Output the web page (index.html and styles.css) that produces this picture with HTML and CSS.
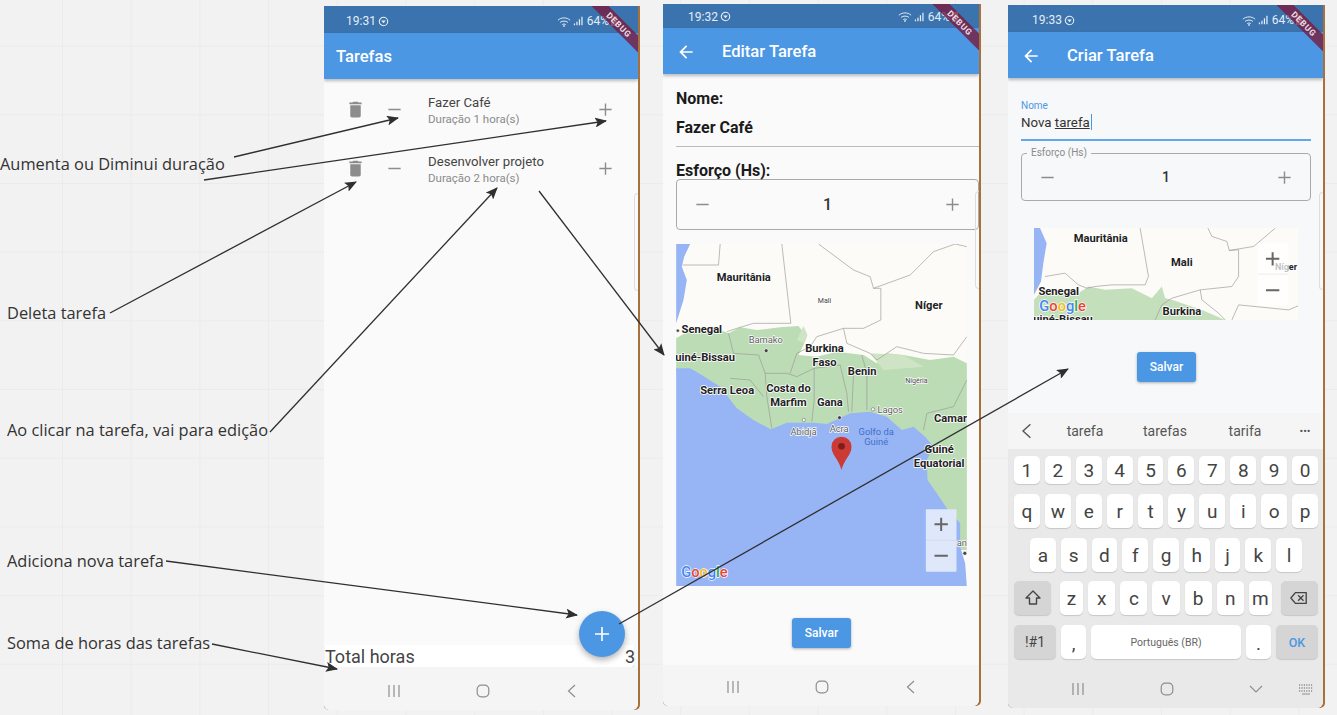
FILE: index.html
```html
<!DOCTYPE html>
<html lang="pt-BR">
<head>
    <meta charset="UTF-8">
    <meta name="viewport" content="width=device-width, initial-scale=1.0">
    <title>Tarefas - fluxo de telas</title>
    <link rel="stylesheet" href="styles.css">
</head>
<body>
    <svg class="sprite" aria-hidden="true">
        <symbol id="i-trash" viewBox="0 0 24 24"><path d="M6 19c0 1.1.9 2 2 2h8c1.1 0 2-.9 2-2V7H6v12zM19 4h-3.500l-1-1h-5l-1 1H5v2h14V4z"/></symbol>
        <symbol id="i-plus" viewBox="0 0 24 24"><path d="M19 12.800h-6.200V19h-1.600v-6.200H5v-1.600h6.200V5h1.600v6.200H19z"/></symbol>
        <symbol id="i-minus" viewBox="0 0 24 24"><path d="M19 12.800H5v-1.600h14z"/></symbol>
        <symbol id="i-back" viewBox="0 0 24 24"><path d="M20 11H7.830l5.590-5.590L12 4l-8 8 8 8 1.410-1.410L7.830 13H20v-2z"/></symbol>
        <symbol id="i-wifi" viewBox="0 0 16 12"><path d="M1 4.500C5 1 11 1 15 4.500M3.500 7C6 5 10 5 12.500 7M6 9.500c1.200-.8 2.800-.8 4 0" fill="none" stroke="currentColor" stroke-width="1.100"/><circle cx="8" cy="11" r="1"/></symbol>
        <symbol id="i-signal" viewBox="0 0 12 12"><path d="M1 9h1.500v2H1zM4 7h1.500v4H4zM7 4h1.500v7H7zM10 1h1.500v10H10z"/></symbol>
        <symbol id="i-target" viewBox="0 0 12 12"><circle cx="6" cy="6" r="4.600" fill="none" stroke="currentColor" stroke-width="1.200"/><path d="M3.500 5h5L6 8z"/></symbol>
        <symbol id="i-nav-recent" viewBox="0 0 14 14"><path d="M2 1v12M7 1v12M12 1v12" fill="none" stroke="currentColor" stroke-width="1.200"/></symbol>
        <symbol id="i-nav-home" viewBox="0 0 14 14"><rect x="1.200" y="1.200" width="11.600" height="11.600" rx="4" fill="none" stroke="currentColor" stroke-width="1.200"/></symbol>
        <symbol id="i-nav-back" viewBox="0 0 14 14"><path d="M10 1L3.500 7l6.500 6" fill="none" stroke="currentColor" stroke-width="1.200"/></symbol>
    </svg>

    <main class="canvas">
        <p class="note note-duration">Aumenta ou Diminui duração</p>
        <p class="note note-delete">Deleta tarefa</p>
        <p class="note note-edit">Ao clicar na tarefa, vai para edição</p>
        <p class="note note-add">Adiciona nova tarefa</p>
        <p class="note note-sum">Soma de horas das tarefas</p>

        <!-- tela 1: lista -->
        <section class="phone phone-list">
            <div class="screen">
                <div class="status">
                    <span class="clock">19:31</span>
                    <svg class="ic-target"><use href="#i-target"/></svg>
                    <span class="status-right">
                        <svg class="ic-wifi"><use href="#i-wifi"/></svg>
                        <svg class="ic-signal"><use href="#i-signal"/></svg>
                        <span>64%</span>
                        <span class="battery"></span>
                    </span>
                </div>
                <header class="appbar"><h1>Tarefas</h1></header>
                <div class="list">
                    <div class="task">
                        <svg class="ic ic-trash"><use href="#i-trash"/></svg>
                        <svg class="ic ic-step"><use href="#i-minus"/></svg>
                        <div class="task-text">
                            <p class="task-name">Fazer Café</p>
                            <p class="task-sub">Duração 1 hora(s)</p>
                        </div>
                        <svg class="ic ic-step"><use href="#i-plus"/></svg>
                    </div>
                    <div class="task">
                        <svg class="ic ic-trash"><use href="#i-trash"/></svg>
                        <svg class="ic ic-step"><use href="#i-minus"/></svg>
                        <div class="task-text">
                            <p class="task-name">Desenvolver projeto</p>
                            <p class="task-sub">Duração 2 hora(s)</p>
                        </div>
                        <svg class="ic ic-step"><use href="#i-plus"/></svg>
                    </div>
                </div>
                <div class="total"><span>Total horas</span><span>3</span></div>
                <nav class="navbar">
                    <svg><use href="#i-nav-recent"/></svg>
                    <svg><use href="#i-nav-home"/></svg>
                    <svg><use href="#i-nav-back"/></svg>
                </nav>
            </div>
            <button class="fab"><svg><use href="#i-plus"/></svg></button>
            <div class="edge-tab"></div>
            <div class="ribbon"><span>DEBUG</span></div>
        </section>

        <!-- tela 2: editar -->
        <section class="phone phone-edit">
            <div class="screen">
                <div class="status">
                    <span class="clock">19:32</span>
                    <svg class="ic-target"><use href="#i-target"/></svg>
                    <span class="status-right">
                        <svg class="ic-wifi"><use href="#i-wifi"/></svg>
                        <svg class="ic-signal"><use href="#i-signal"/></svg>
                        <span>64%</span>
                        <span class="battery"></span>
                    </span>
                </div>
                <header class="appbar">
                    <svg class="ic-back"><use href="#i-back"/></svg>
                    <h1>Editar Tarefa</h1>
                </header>
                <div class="edit-form">
                    <p class="bold-label">Nome:</p>
                    <p class="bold-value">Fazer Café</p>
                    <p class="bold-label effort-label">Esforço (Hs):</p>
                    <div class="stepper stepper-edit">
                        <svg class="ic ic-step"><use href="#i-minus"/></svg>
                        <span>1</span>
                        <svg class="ic ic-step"><use href="#i-plus"/></svg>
                    </div>
                    <svg class="map map-large" viewBox="18 12 872 1026">
                        <rect x="18" y="12" width="872" height="1026" fill="#fdfbf7"/>
                        <path d="M18 400L18 295L70 265L130 262L175 280L210 262L260 270L330 262L385 258L410 290L400 315L385 345L440 350L500 335L580 345L620 370L650 340L700 345L780 360L850 350L890 370L890 930L700 930Z" fill="#bcdcb6"/>
                        <path d="M380 300L400 258L412 285L400 310ZM600 340L700 345L760 380L640 390Z" fill="#cfe4c4"/>
                        <path d="M18 12L60 12L42 50L35 80L50 120L40 180L18 250Z" fill="#97b5f5"/>
                        <path d="M18 385L60 385L95 405L150 440L200 505L250 540L302 568L350 548L430 548L470 552L540 520L600 515L650 530L695 570L730 560L765 590L790 620L770 660L772 720L800 760L830 805L870 850L870 920L885 970L890 1038L18 1038Z" fill="#97b5f5"/>
                        <g fill="none" stroke="#9a9a94" stroke-width="2">
                            <path d="M150 12L145 75L38 75"/>
                            <path d="M335 12L362 250L250 250L200 265L170 275"/>
                            <path d="M445 12L550 90L600 110L610 145L720 105L790 35L855 12L890 20"/>
                            <path d="M610 145L632 145L632 240L580 265L520 265L440 290L420 320L380 340L360 400"/>
                            <path d="M520 265L530 310L600 340L620 360L680 320L760 340L850 345L890 290"/>
                            <path d="M175 280L190 340L265 345L285 400L290 470L305 565"/>
                            <path d="M285 400L350 400L380 410L432 385L432 480L425 545"/>
                            <path d="M432 385L510 375L530 460L535 515"/>
                            <path d="M575 345L590 400L590 510M550 400L545 515"/>
                            <path d="M180 415L240 420L280 470M890 420L850 500L770 520L760 570"/>
                        </g>
                        <g class="map-dots">
                            <circle cx="288" cy="332" r="6"/><circle cx="508" cy="533" r="6"/><circle cx="23" cy="272" r="5"/><circle cx="884" cy="940" r="6"/>
                        </g>
                        <circle cx="401" cy="540" r="5" fill="#fff" stroke="#777" stroke-width="2"/>
                        <circle cx="608" cy="508" r="5" fill="#fff" stroke="#777" stroke-width="2"/>
                        <g class="map-b" text-anchor="middle">
                            <text x="221" y="122">Mauritânia</text>
                            <text x="776" y="207">Níger</text>
                            <text x="95" y="278">Senegal</text>
                            <text x="463" y="336">Burkina</text>
                            <text x="463" y="377">Faso</text>
                            <text x="576" y="405">Benin</text>
                            <text x="105" y="364">uiné-Bissau</text>
                            <text x="171" y="463">Serra Leoa</text>
                            <text x="355" y="456">Costa do</text>
                            <text x="355" y="497">Marfim</text>
                            <text x="479" y="497">Gana</text>
                            <text x="841" y="545">Camar</text>
                            <text x="807" y="640">Guiné</text>
                            <text x="807" y="681">Equatorial</text>
                        </g>
                        <g class="map-s" text-anchor="middle">
                            <text x="463" y="190" class="map-tiny">Mali</text>
                            <text x="739" y="428" class="map-tiny">Nigéria</text>
                            <text x="287" y="310">Bamako</text>
                            <text x="660" y="518">Lagos</text>
                            <text x="400" y="584">Abidjã</text>
                            <text x="507" y="577">Acra</text>
                            <text x="860" y="918">Luan</text>
                        </g>
                        <g class="map-sea" text-anchor="middle">
                            <text x="618" y="584">Golfo da</text>
                            <text x="618" y="614">Guiné</text>
                        </g>
                        <path d="M514 690C505 655 484 645 484 620a30 30 0 0 1 60 0C544 645 523 655 514 690z" fill="#cb3a34"/>
                        <circle cx="514" cy="619" r="10" fill="#7e1e1b"/>
                        <rect x="767" y="808" width="92" height="187" rx="3" fill="#dfe7fb"/>
                        <path d="M767 901H859" stroke="#ccd4e6" stroke-width="2"/>
                        <path d="M793 853H833M813 833V873M793 947H833" stroke="#666" stroke-width="6" fill="none"/>
                        <text class="map-google" x="33" y="1012"><tspan fill="#4285f4">G</tspan><tspan fill="#ea4335">o</tspan><tspan fill="#fbbc05">o</tspan><tspan fill="#4285f4">g</tspan><tspan fill="#34a853">l</tspan><tspan fill="#ea4335">e</tspan></text>
                    </svg>
                    <button class="save save-edit">Salvar</button>
                </div>
                <nav class="navbar">
                    <svg><use href="#i-nav-recent"/></svg>
                    <svg><use href="#i-nav-home"/></svg>
                    <svg><use href="#i-nav-back"/></svg>
                </nav>
            </div>
            <div class="edge-tab"></div>
            <div class="ribbon"><span>DEBUG</span></div>
        </section>

        <!-- tela 3: criar -->
        <section class="phone phone-create">
            <div class="screen">
                <div class="status">
                    <span class="clock">19:33</span>
                    <svg class="ic-target"><use href="#i-target"/></svg>
                    <span class="status-right">
                        <svg class="ic-wifi"><use href="#i-wifi"/></svg>
                        <svg class="ic-signal"><use href="#i-signal"/></svg>
                        <span>64%</span>
                        <span class="battery"></span>
                    </span>
                </div>
                <header class="appbar">
                    <svg class="ic-back"><use href="#i-back"/></svg>
                    <h1>Criar Tarefa</h1>
                </header>
                <div class="create-form">
                    <div class="name-field">
                        <label>Nome</label>
                        <p>Nova <u>tarefa</u><span class="caret"></span></p>
                    </div>
                    <fieldset class="stepper stepper-create">
                        <legend>Esforço (Hs)</legend>
                        <svg class="ic ic-step"><use href="#i-minus"/></svg>
                        <span>1</span>
                        <svg class="ic ic-step"><use href="#i-plus"/></svg>
                    </fieldset>
                    <svg class="map map-small" viewBox="87 25 791 275">
                        <rect x="87" y="25" width="791" height="275" fill="#fdfbf7"/>
                        <path d="M87 240L110 215L220 220L250 200L300 210L380 205L440 235L470 200L480 235L500 240L590 270L660 300L87 300Z" fill="#c4dfbb"/>
                        <path d="M87 25L105 25L125 70L115 130L108 185L87 225Z" fill="#97b5f5"/>
                        <g fill="none" stroke="#9a9a94" stroke-width="2">
                            <path d="M405 25L430 170L420 195L320 195L270 200L245 205L220 195L180 160L120 170"/>
                            <path d="M608 25L620 50L665 65L672 92L745 80L810 25"/>
                            <path d="M672 92L700 90L700 170L680 200L585 210L500 235L470 255L450 300"/>
                            <path d="M585 210L590 240L640 280L660 300M680 300L700 255L770 262L850 270L878 258"/>
                        </g>
                        <g class="map-b" text-anchor="middle">
                            <text x="287" y="68">Mauritânia</text>
                            <text x="530" y="139">Mali</text>
                            <text x="161" y="224">Senegal</text>
                            <text x="530" y="284">Burkina</text>
                            <text x="174" y="308">uiné-Bissau</text>
                            <text x="842" y="152" class="map-niger">Níger</text>
                        </g>
                        <rect x="757" y="70" width="93" height="188" rx="3" fill="#fff" fill-opacity=".72"/>
                        <path d="M757 163H850" stroke="#e6e6e6" stroke-width="2"/>
                        <path d="M782 117H822M802 97V137M782 211H822" stroke="#666" stroke-width="6" fill="none"/>
                        <text class="map-google" x="103" y="272"><tspan fill="#4285f4">G</tspan><tspan fill="#ea4335">o</tspan><tspan fill="#fbbc05">o</tspan><tspan fill="#4285f4">g</tspan><tspan fill="#34a853">l</tspan><tspan fill="#ea4335">e</tspan></text>
                    </svg>
                    <button class="save save-create">Salvar</button>
                </div>
                <div class="suggest">
                    <svg class="suggest-back" viewBox="0 0 14 14"><path d="M10 1L3.500 7l6.500 6" fill="none" stroke="currentColor" stroke-width="1.200"/></svg>
                    <span>tarefa</span><span>tarefas</span><span>tarifa</span>
                    <span class="suggest-more">•••</span>
                </div>
                <div class="keyboard">
                    <div class="kb-row kb-nums">
                        <span class="key">1</span><span class="key">2</span><span class="key">3</span><span class="key">4</span><span class="key">5</span><span class="key">6</span><span class="key">7</span><span class="key">8</span><span class="key">9</span><span class="key">0</span>
                    </div>
                    <div class="kb-row">
                        <span class="key">q</span><span class="key">w</span><span class="key">e</span><span class="key">r</span><span class="key">t</span><span class="key">y</span><span class="key">u</span><span class="key">i</span><span class="key">o</span><span class="key">p</span>
                    </div>
                    <div class="kb-row kb-home">
                        <span class="key">a</span><span class="key">s</span><span class="key">d</span><span class="key">f</span><span class="key">g</span><span class="key">h</span><span class="key">j</span><span class="key">k</span><span class="key">l</span>
                    </div>
                    <div class="kb-row kb-shift">
                        <span class="key key-gray key-side">
                            <svg viewBox="0 0 18 18"><path d="M9 2L2 9h3.500v6h7V9H16z" fill="none" stroke="currentColor" stroke-width="1.400" stroke-linejoin="round"/></svg>
                        </span>
                        <span class="key">z</span><span class="key">x</span><span class="key">c</span><span class="key">v</span><span class="key">b</span><span class="key">n</span><span class="key">m</span>
                        <span class="key key-gray key-side">
                            <svg viewBox="0 0 20 16"><path d="M6 2h12v12H6L1 8z" fill="none" stroke="currentColor" stroke-width="1.500" stroke-linejoin="round"/><path d="M9 5l6 6M15 5l-6 6" stroke="currentColor" stroke-width="1.500"/></svg>
                        </span>
                    </div>
                    <div class="kb-row kb-bottom">
                        <span class="key key-gray key-sym">!#1</span>
                        <span class="key key-punct">,</span>
                        <span class="key key-space">Português (BR)</span>
                        <span class="key key-punct">.</span>
                        <span class="key key-gray key-ok">OK</span>
                    </div>
                </div>
                <nav class="navbar navbar-kb">
                    <svg><use href="#i-nav-recent"/></svg>
                    <svg><use href="#i-nav-home"/></svg>
                    <svg class="nav-down" viewBox="0 0 14 14"><path d="M1 4l6 6 6-6" fill="none" stroke="currentColor" stroke-width="1.100"/></svg>
                    <svg class="nav-keys" viewBox="0 0 16 12"><path d="M1 2h14M1 5h14M1 8h14" fill="none" stroke="currentColor" stroke-width="1.300" stroke-dasharray="1.200 1.200"/><path d="M4 11h8" stroke="currentColor" stroke-width="1.200"/></svg>
                </nav>
            </div>
            <div class="edge-tab"></div>
            <div class="ribbon"><span>DEBUG</span></div>
        </section>

        <svg class="arrows" viewBox="0 0 1337 715">
            <defs>
                <marker id="head" viewBox="0 0 12 10" refX="11" refY="5" markerWidth="12" markerHeight="10" markerUnits="userSpaceOnUse" orient="auto">
                    <path d="M0 0L12 5L0 10L2.500 5z" fill="#2f2f2f"/>
                </marker>
            </defs>
            <g stroke="#2f2f2f" stroke-width="1.300" marker-end="url(#head)">
                <line x1="234" y1="157" x2="398" y2="118"/>
                <line x1="204" y1="180" x2="606" y2="121"/>
                <line x1="110" y1="313" x2="356" y2="182"/>
                <line x1="270" y1="432" x2="497" y2="188"/>
                <line x1="539" y1="191" x2="664" y2="355"/>
                <line x1="166" y1="561" x2="577" y2="615"/>
                <line x1="212" y1="644" x2="337" y2="669"/>
                <line x1="619" y1="624" x2="1068" y2="369"/>
            </g>
        </svg>
    </main>
</body>
</html>
```
FILE: styles.css
```css
* {
    box-sizing: border-box;
}
body {
    margin: 0;
    font-family: Roboto, Arial, sans-serif;
    background: #f2f2f2;
}
p, h1 {
    margin: 0;
}
.sprite {
    display: none;
}
.canvas {
    position: relative;
    width: 1337px;
    height: 715px;
    overflow: hidden;
    background-color: #f2f2f2;
    background-image:
        linear-gradient(to right, #ebebeb 1px, transparent 1px),
        linear-gradient(to bottom, #ebebeb 1px, transparent 1px);
    background-size: 68.7px 68.7px;
    background-position: 62px 45.6px;
}

/* notas da esquerda */
.note {
    position: absolute;
    left: 7px;
    font-family: "Open Sans", Arial, sans-serif;
    font-size: 16.4px;
    line-height: 22px;
    color: #333;
    white-space: nowrap;
}
.note-duration { left: 0; top: 153px; }
.note-delete { top: 302px; }
.note-edit { top: 419px; }
.note-add { top: 550px; }
.note-sum { top: 632px; }

.arrows {
    position: absolute;
    left: 0;
    top: 0;
    width: 1337px;
    height: 715px;
    pointer-events: none;
}

/* telefones */
.phone {
    position: absolute;
    background: #a8703a;
    border-radius: 0 0 5px 5px;
}
.phone-list { left: 324px; top: 6px; width: 316px; height: 704px; }
.phone-edit { left: 663px; top: 4px; width: 318px; height: 702px; }
.phone-create { left: 1008px; top: 5px; width: 317px; height: 703px; }
.screen {
    display: flex;
    flex-direction: column;
    height: 100%;
    margin-right: 2px;
    overflow: hidden;
    background: #fafafa;
    border-radius: 0 0 6px 6px;
}
.status {
    display: flex;
    align-items: center;
    flex: none;
    height: 27px;
    padding: 3px 0 0 22px;
    background: #3b73ae;
    color: #e4edf6;
    font-size: 12px;
}
.phone-edit .status {
    height: 24px;
    padding: 1px 0 0 25px;
}
.phone-create .status {
    padding-left: 24px;
}
.clock {
    width: 28px;
}
.ic-target {
    width: 11px;
    height: 11px;
    margin-left: 4px;
    fill: currentColor;
}
.status-right {
    display: flex;
    align-items: center;
    gap: 2px;
    margin-left: auto;
    margin-right: 21px;
}
.ic-wifi {
    width: 14px;
    height: 11px;
    fill: currentColor;
}
.ic-signal {
    width: 10px;
    height: 10px;
    margin-right: 2px;
    fill: currentColor;
}
.battery {
    width: 6px;
    height: 10px;
    background: #e4edf6;
    border-radius: 1px;
}
.appbar {
    position: relative;
    display: flex;
    align-items: center;
    flex: none;
    height: 46px;
    padding: 1px 0 0 12px;
    background: #4c97e4;
    color: #fff;
    box-shadow: 0 2px 3px rgba(0, 0, 0, 0.25);
}
.appbar h1 {
    font-size: 16.6px;
    font-weight: 500;
}
.ic-back {
    width: 20px;
    height: 20px;
    margin: 0 26px 0 1px;
    fill: #fff;
}
.ribbon {
    position: absolute;
    top: 0;
    right: 2px;
    width: 46px;
    height: 46px;
    overflow: hidden;
}
.ribbon span {
    position: absolute;
    left: -13px;
    top: 13px;
    width: 80px;
    height: 12px;
    background: rgba(120, 25, 60, 0.78);
    color: #e9dfe4;
    font-size: 8.5px;
    font-weight: 700;
    line-height: 12px;
    text-align: center;
    letter-spacing: 0.8px;
    transform: rotate(45deg);
}
.edge-tab {
    position: absolute;
    top: 187px;
    right: 2px;
    width: 4px;
    height: 98px;
    border: 1px solid #ddd;
    border-right: 0;
    border-radius: 4px 0 0 4px;
}
.ic {
    display: block;
    fill: #8c8c8c;
}
.ic-trash {
    width: 21px;
    height: 21px;
    justify-self: center;
}
.ic-step {
    width: 21px;
    height: 21px;
    justify-self: center;
}

/* lista */
.list {
    flex: 1;
    padding-top: 1px;
}
.task {
    display: grid;
    grid-template-columns: 38px 40px 1fr 40px;
    align-items: center;
    height: 59px;
    padding: 0 13px 0 12px;
}
.task-text {
    padding-left: 14px;
}
.task-name {
    font-size: 13.2px;
    line-height: 18px;
    color: #444;
}
.task-sub {
    font-size: 11.5px;
    line-height: 14px;
    color: #8a8a8a;
}
.total {
    display: flex;
    justify-content: space-between;
    flex: none;
    height: 22px;
    margin: 0 4px 0 1px;
    background: #fff;
    border-radius: 0 0 3px 3px;
    box-shadow: 0 1px 1px rgba(0, 0, 0, 0.2);
    font-size: 18px;
    line-height: 23px;
    color: #444;
}
.total span:last-child {
    margin-right: -1px;
}
.fab {
    position: absolute;
    left: 255px;
    top: 605px;
    width: 46px;
    height: 46px;
    padding: 11px;
    border: 0;
    border-radius: 50%;
    background: #4c97e4;
    box-shadow: 0 3px 6px rgba(0, 0, 0, 0.3);
}
.fab svg {
    display: block;
    width: 24px;
    height: 24px;
    fill: #fff;
}
.navbar {
    display: grid;
    grid-template-columns: repeat(3, 89px);
    justify-items: center;
    align-items: center;
    flex: none;
    height: 43px;
    padding: 4px 0 0 25px;
    background: #f5f5f5;
    color: #8e8e8e;
}
.navbar svg {
    width: 14px;
    height: 14px;
}
.phone-edit .navbar {
    height: 41px;
    padding-top: 2px;
}

/* editar */
.edit-form {
    flex: 1;
    padding: 15px 0 0 13px;
}
.bold-label, .bold-value {
    font-size: 16px;
    font-weight: 700;
    line-height: 20px;
    color: #1b1b1b;
}
.bold-value {
    margin-top: 9px;
    padding-bottom: 8px;
    border-bottom: 1px solid #bbb;
}
.effort-label {
    margin-top: 14px;
    margin-bottom: -2px;
}
.stepper {
    display: flex;
    align-items: center;
    justify-content: space-between;
    border: 1px solid #aaa;
    border-radius: 4px;
    font-size: 16px;
    color: #333;
}
.stepper-edit {
    height: 51px;
    padding: 0 15px;
}
.stepper span {
    font-weight: 500;
}
.map {
    display: block;
}
.map-large {
    width: 291px;
    height: 342px;
    margin-top: 14px;
}
.map-small {
    width: 264px;
    height: 92px;
    margin: 27px 0 0 13px;
}
.map text {
    font-family: Roboto, Arial, sans-serif;
    paint-order: stroke;
    stroke: #fff;
    stroke-linejoin: round;
}
.map-b {
    font-size: 33.5px;
    font-weight: 700;
    fill: #222;
}
.map-b text {
    stroke-width: 5px;
}
.map .map-niger {
    font-size: 27px;
}
.map-s {
    font-size: 28px;
    fill: #5c5c5c;
}
.map-s text {
    stroke-width: 4px;
}
.map .map-tiny {
    font-size: 21px;
    fill: #444;
}
.map-sea {
    font-size: 28px;
    fill: #3f6fc9;
}
.map-sea text {
    stroke: none;
}
.map-dots circle {
    fill: #444;
    stroke: #fff;
    stroke-width: 2;
}
.map .map-google {
    font-size: 44px;
    font-weight: 500;
    stroke-width: 4px;
}
.save {
    display: block;
    width: 59px;
    height: 30px;
    padding: 0;
    border: 0;
    border-radius: 3px;
    background: #4c97e4;
    color: #fff;
    font-family: Roboto, Arial, sans-serif;
    font-size: 12px;
    font-weight: 500;
    box-shadow: 0 1px 3px rgba(0, 0, 0, 0.3);
}
.save-edit {
    margin: 32px 0 0 116px;
}
.save-create {
    margin: 32px 0 0 116px;
}

/* criar */
.create-form {
    flex: 1;
    padding: 21px 12px 0 13px;
    background: #f7f8f9;
}
.name-field {
    height: 42px;
    border-bottom: 2px solid #62a6ec;
}
.name-field label {
    display: block;
    font-size: 10px;
    line-height: 14px;
    color: #4c97e4;
}
.name-field p {
    font-size: 13.3px;
    line-height: 20px;
    color: #333;
}
.caret {
    display: inline-block;
    width: 1px;
    height: 16px;
    margin-left: 1px;
    vertical-align: -3px;
    background: #4c97e4;
}
.stepper-create {
    position: relative;
    height: 55px;
    margin: 5px 0 0;
    padding: 0 15px 6px;
    min-width: 0;
}
.stepper-create legend {
    margin-left: -10px;
    padding: 0 4px;
    font-size: 10px;
    line-height: 14px;
    color: #8a8a8a;
}
.stepper-create span {
    font-size: 14px;
}
.suggest {
    display: grid;
    grid-template-columns: 37px repeat(3, 80px) 40px;
    align-items: center;
    justify-items: center;
    flex: none;
    height: 36px;
    background: #f5f5f5;
    font-size: 14px;
    color: #555;
}
.suggest-back {
    width: 16px;
    height: 16px;
    color: #555;
}
.suggest-more {
    font-size: 11px;
    letter-spacing: 0;
}
.keyboard {
    display: flex;
    flex-direction: column;
    gap: 10px;
    flex: none;
    height: 218px;
    padding: 7px 5px 0 6px;
    background: #e9e9e9;
}
.kb-row {
    display: grid;
    grid-template-columns: repeat(10, 1fr);
    gap: 5px;
    height: 34px;
}
.kb-nums {
    height: 28px;
}
.kb-home {
    grid-template-columns: repeat(9, 1fr);
    padding: 0 16px;
}
.kb-shift {
    grid-template-columns: 37px repeat(7, 1fr) 37px;
    margin-top: -1px;
}
.kb-shift .key:nth-child(2) {
    margin-left: 4px;
}
.kb-shift .key:nth-child(8) {
    margin-right: 4px;
}
.kb-bottom {
    grid-template-columns: 42px 25px 1fr 25px 42px;
}
.key {
    display: flex;
    align-items: center;
    justify-content: center;
    background: #fff;
    border-radius: 5px;
    box-shadow: 0 1px 1px rgba(0, 0, 0, 0.15);
    font-size: 19px;
    color: #444;
}
.key-gray {
    background: #d5d5d5;
}
.key-side svg {
    width: 18px;
    height: 18px;
}
.key-sym {
    font-size: 14px;
}
.key-punct {
    align-items: flex-end;
    padding-bottom: 4px;
}
.key-space {
    font-size: 10.5px;
    color: #666;
}
.key-ok {
    font-size: 12.5px;
    font-weight: 500;
    color: #4c97e4;
}
.navbar-kb {
    grid-template-columns: repeat(3, 89px) 1fr;
    background: #e9e9e9;
    height: 41px;
    padding-top: 2px;
}
.navbar .nav-keys {
    justify-self: start;
    width: 16px;
    height: 12px;
    margin-left: -2px;
}
```
